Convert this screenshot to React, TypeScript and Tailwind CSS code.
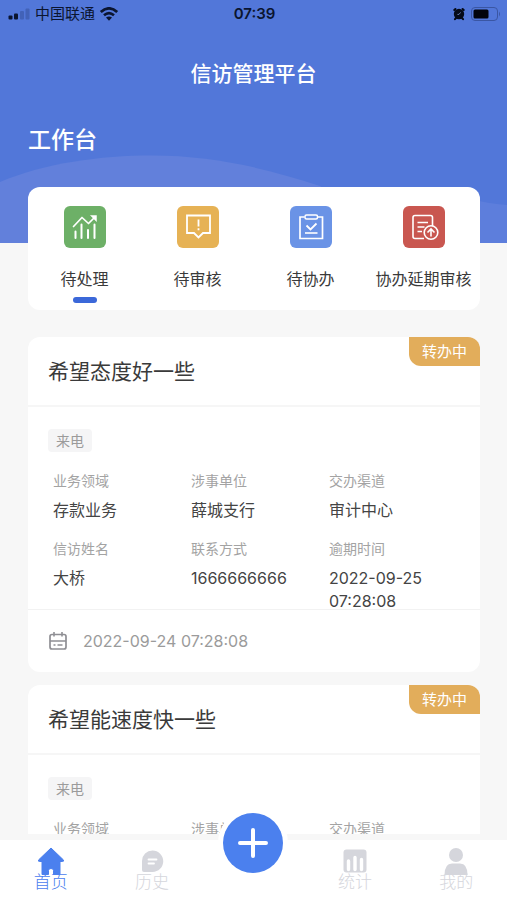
import type { ReactNode } from "react";

const shortcuts = [
  {
    label: "待处理",
    color: "bg-[#6db067]",
    active: true,
    icon: (
      <svg width="42" height="42" viewBox="0 0 42 42" fill="none" stroke="#fff">
        <path
          d="M9.5 20.5 L18 11.5 L24.5 17.5 L31 11"
          strokeWidth="1.7"
          strokeLinecap="round"
          strokeLinejoin="round"
        />
        <path d="M26.5 9.5 H32.5 V15.5 Z" fill="#fff" strokeWidth="0.5" />
        <path
          d="M11.5 25.5 V32 M17.5 18.5 V32 M24 24 V32 M30.5 18.5 V32"
          strokeWidth="2"
          strokeLinecap="round"
        />
      </svg>
    ),
  },
  {
    label: "待审核",
    color: "bg-[#e6b255]",
    active: false,
    icon: (
      <svg width="42" height="42" viewBox="0 0 42 42" fill="none" stroke="#fff">
        <path d="M10 9.5 H33 V27 H26 L21.5 31.5 L17 27 H10 Z" strokeWidth="1.8" />
        <path d="M21.5 13.5 V20.5 M21.5 22.3 V24.3" strokeWidth="1.8" />
      </svg>
    ),
  },
  {
    label: "待协办",
    color: "bg-[#6a93e6]",
    active: false,
    icon: (
      <svg width="42" height="42" viewBox="0 0 42 42" fill="none" stroke="#fff">
        <path d="M14.5 11 H10 V32.5 H32.5 V11 H28" strokeWidth="1.7" />
        <rect x="15" y="9" width="12.5" height="4" rx="1.5" strokeWidth="1.5" />
        <path d="M16.5 19.5 L20.5 23.5 L26.5 17.5" strokeWidth="1.8" />
        <path d="M15 27 H27.5" strokeWidth="1.6" />
      </svg>
    ),
  },
  {
    label: "协办延期审核",
    color: "bg-[#c95750]",
    active: false,
    icon: (
      <svg width="42" height="42" viewBox="0 0 42 42" fill="none" stroke="#fff">
        <path
          d="M21 32.5 H12 Q10 32.5 10 30.5 V11.5 Q10 9.5 12 9.5 H27.5 Q29.5 9.5 29.5 11.5 V20"
          strokeWidth="1.6"
        />
        <path d="M14.5 16.5 H25 M14.5 21 H21.5 M14.5 25.5 H19" strokeWidth="1.5" />
        <circle cx="28" cy="26.5" r="6.8" strokeWidth="1.6" />
        <path d="M28 30.5 V23.5 M24.5 26.5 L28 23 L31.5 26.5" strokeWidth="1.6" />
      </svg>
    ),
  },
];

const fields = [
  { label: "业务领域", value: "存款业务" },
  { label: "涉事单位", value: "薛城支行" },
  { label: "交办渠道", value: "审计中心" },
  { label: "信访姓名", value: "大桥" },
  { label: "联系方式", value: "1666666666" },
  { label: "逾期时间", value: "2022-09-25 07:28:08" },
];

const tickets = [
  { title: "希望态度好一些", status: "转办中", source: "来电", time: "2022-09-24 07:28:08" },
  { title: "希望能速度快一些", status: "转办中", source: "来电", time: "2022-09-24 07:28:08" },
];

function StatusBar() {
  return (
    <div className="relative grid grid-cols-3 items-center h-7 pl-2 pr-1.5 text-[#0b1530]">
      <div className="flex items-center gap-1">
        <svg width="23" height="12" viewBox="0 0 23 12">
          <rect x="0.5" y="7.5" width="4" height="4" rx="1" fill="#0b1530" />
          <rect x="6" y="5.5" width="4" height="6" rx="1" fill="#0b1530" />
          <rect x="12" y="3" width="4" height="8.5" rx="1" fill="#4262b8" />
          <rect x="17.5" y="0.5" width="4" height="11" rx="1" fill="#4262b8" />
        </svg>
        <span className="text-[15px] leading-5 whitespace-nowrap">中国联通</span>
        <svg width="20" height="14" viewBox="0 0 20 14" fill="none" stroke="#0b1530">
          <path d="M1.8 5 Q10 -2.2 18.2 5" strokeWidth="2.8" />
          <path d="M5 8.3 Q10 4 15 8.3" strokeWidth="2.6" />
          <path d="M7 10.6 Q10 8.2 13 10.6 L10 13.8 Z" fill="#0b1530" stroke="none" />
        </svg>
      </div>
      <span className="text-center text-[15px] leading-5 font-semibold">07:39</span>
      <div className="flex items-center justify-end gap-1.5">
        <svg width="12" height="14" viewBox="0 0 12 14">
          <circle cx="6" cy="7" r="5.2" fill="#050a18" />
          <path
            d="M1.3 3 L2.4 2 M10.7 3 L9.6 2 M2 12.2 L3 11 M10 12.2 L9 11"
            stroke="#050a18"
            strokeWidth="2"
            strokeLinecap="round"
          />
          <path d="M7.6 5.4 L6 7.4 H4.4" stroke="#7c94cf" strokeWidth="0.8" fill="none" />
        </svg>
        <svg width="30" height="14" viewBox="0 0 30 14">
          <rect x="0.5" y="0.5" width="26" height="13" rx="3.5" fill="none" stroke="#3a56a3" />
          <rect x="2.5" y="2.5" width="15" height="9" rx="1.5" fill="#02040c" />
          <path d="M28 4.5 Q30 7 28 9.5 Z" fill="#3a56a3" />
        </svg>
      </div>
    </div>
  );
}

function Header() {
  return (
    <header className="relative shrink-0 bg-[#5277d9] pb-[85px]">
      {/* Wave backdrop */}
      <svg
        className="absolute inset-0 w-full h-full"
        viewBox="0 0 507 243"
        preserveAspectRatio="none"
      >
        <path
          d="M0 182 C45 163 100 155.5 152 155.5 C212 155.5 265 168 320 186 L400 243 H0 Z"
          fill="#6280db"
        />
        <path d="M440 243 V188 C460 197 480 203 507 205 V243 Z" fill="#5d7edc" />
      </svg>
      <StatusBar />
      <h1 className="relative mt-7 text-center text-[21px] leading-9 font-medium text-white">
        信访管理平台
      </h1>
      <h2 className="relative mt-[30px] ml-7 text-[23px] leading-9 font-medium text-white">
        工作台
      </h2>
    </header>
  );
}

function Shortcuts() {
  return (
    <div className="relative shrink-0 -mt-14 ml-7 mr-[27px] grid grid-cols-4 rounded-xl bg-white pt-[19px] pb-[7px]">
      {shortcuts.map((item) => (
        <button key={item.label} type="button" className="flex flex-col items-center">
          <span className={`rounded-md ${item.color}`}>{item.icon}</span>
          <span className="mt-[19px] text-base leading-6 text-[#3a3a3a] whitespace-nowrap">
            {item.label}
          </span>
          <span className={`mt-1.5 h-1.5 w-6 rounded-full ${item.active ? "bg-[#3b68d9]" : ""}`} />
        </button>
      ))}
    </div>
  );
}

function TicketCard({ ticket }: { ticket: (typeof tickets)[number] }) {
  return (
    <article className="relative rounded-xl bg-white">
      <span className="absolute top-0 right-0 rounded-tr-xl rounded-bl-xl bg-[#e2ad5b] px-[13px] text-[15px] leading-[29px] text-white">
        {ticket.status}
      </span>
      <h3 className="border-b-2 border-[#f6f6f6] pl-5 pt-[17px] pb-[15px] text-[21px] leading-9 text-[#3a3a3a]">
        {ticket.title}
      </h3>
      <div className="pt-[22px] pl-5">
        <span className="block w-11 rounded bg-[#f5f5f6] text-center text-sm leading-[23px] text-[#9b9b9b]">
          {ticket.source}
        </span>
        <dl className="mt-[19px] -mb-1 ml-[5px] grid grid-cols-[138px_138px_1fr] gap-y-[17px]">
          {fields.map((field) => (
            <div key={field.label}>
              <dt className="text-sm leading-5 text-[#a3a3a3]">{field.label}</dt>
              <dd className="mt-2 pr-8 text-base leading-[23px] text-[#444]">{field.value}</dd>
            </div>
          ))}
        </dl>
      </div>
      <div className="flex items-center gap-[15px] border-t border-[#f2f2f2] px-5 py-[19px]">
        <svg width="20" height="20" viewBox="0 0 20 20" fill="none" stroke="#8f8f94">
          <rect x="2" y="3.5" width="16" height="14.5" rx="2" strokeWidth="1.7" />
          <path d="M2 10 H18 M6 1 V5.5 M14 1 V5.5" strokeWidth="1.6" />
          <path d="M5.5 14 H7.5 M9.5 14 H14.5" strokeWidth="1.6" />
        </svg>
        <time className="text-base leading-6 text-[#9b9b9b]">{ticket.time}</time>
      </div>
    </article>
  );
}

function NavItem({ label, active, children }: { label: string; active?: boolean; children: ReactNode }) {
  return (
    <a
      href="#"
      className={`flex flex-col items-center pt-1.5 font-light ${active ? "text-[#4b80ee]" : "text-[#d5d6dc]"}`}
    >
      {children}
      <span className="-mt-1.5 text-[17px] leading-6">{label}</span>
    </a>
  );
}

function BottomNav() {
  return (
    <nav className="relative shrink-0 grid grid-cols-5 h-15 bg-white">
      <NavItem label="首页" active>
        <svg width="30" height="30" viewBox="0 0 30 30" fill="#4b80ee">
          <path
            d="M15 2 L27.5 14 Q28 15.5 26.5 15.5 H24 V28.5 H17.5 V24.5 Q17.5 22.5 15 22.5 Q12.500 22.5 12.5 24.5 V28.5 H6 V15.5 H3.5 Q2 15.5 2.5 14 Z"
            stroke="#4b80ee"
            strokeLinejoin="round"
          />
        </svg>
      </NavItem>
      <NavItem label="历史">
        <svg width="30" height="30" viewBox="0 0 30 30">
          <path
            d="M15.5 4.5 A10.5 10.5 0 1 1 15.5 26 H7 Q5 26 5 24 V15 A10.5 10.5 0 0 1 15.5 4.5 Z"
            fill="#d5d6dc"
          />
          <path
            d="M11.5 13.5 H19.5 M11.5 17.5 H17"
            stroke="#fff"
            strokeWidth="1.8"
            strokeLinecap="round"
          />
        </svg>
      </NavItem>
      <div className="flex justify-center">
        <button
          type="button"
          aria-label="新增"
          className="-mt-[27px] flex size-15 items-center justify-center rounded-full bg-[#4b80ee] ring-5 ring-white"
        >
          <svg
            width="32"
            height="32"
            viewBox="0 0 32 32"
            stroke="#fff"
            strokeWidth="4"
            strokeLinecap="round"
          >
            <path d="M16 3 V29 M3 16 H29" />
          </svg>
        </button>
      </div>
      <NavItem label="统计">
        <svg width="30" height="30" viewBox="0 0 30 30">
          <rect x="3.5" y="3.5" width="23" height="23" rx="3" fill="#d5d6dc" />
          <path
            d="M8.5 15 V23.5 M15 11.5 V23.5 M21.5 13.5 V23.5"
            stroke="#fff"
            strokeWidth="3.4"
            strokeLinecap="round"
          />
        </svg>
      </NavItem>
      <NavItem label="我的">
        <svg width="30" height="30" viewBox="0 0 30 30" fill="#d5d6dc">
          <circle cx="15" cy="9" r="7" />
          <path d="M3.5 29 Q3.5 17.5 11 17.5 H19 Q26.5 17.5 26.5 29 Z" />
        </svg>
      </NavItem>
    </nav>
  );
}

export default function App() {
  return (
    <div className="flex h-screen flex-col bg-[#f7f7f7] font-['Inter','Noto_Sans_CJK_SC',sans-serif]">
      <Header />
      <Shortcuts />
      <main className="mt-[27px] mb-1.5 min-h-0 flex-1 overflow-y-auto pl-7 pr-[27px] [scrollbar-width:none]">
        <div className="flex flex-col gap-[13px]">
          {tickets.map((ticket) => (
            <TicketCard key={ticket.title} ticket={ticket} />
          ))}
        </div>
      </main>
      <BottomNav />
    </div>
  );
}
